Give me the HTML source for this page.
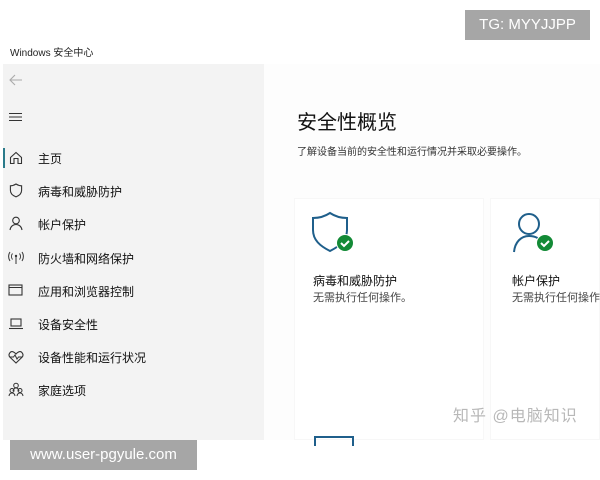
<!DOCTYPE html>
<html><head><meta charset="utf-8"><style>
*{margin:0;padding:0;box-sizing:border-box}
body{width:600px;height:480px;background:#fff;position:relative;overflow:hidden;font-family:"Liberation Sans","Noto Sans CJK SC",sans-serif;color:#1a1a1a}
.abs{position:absolute}
.side{left:3px;top:64px;width:261px;height:376px;background:#f3f3f3}
.item{position:absolute;left:38px;font-size:12px;color:#111}
.card{position:absolute;border:1px solid #f7f7f7;background:#fff}
</style></head><body>
<div class="abs" style="left:10px;top:44px;font-size:10px;color:#222">Windows 安全中心</div>
<div class="abs" style="left:264px;top:64px;width:336px;height:376px;background:#fdfdfd"></div>
<div class="abs side"></div>
<div class="abs" style="left:3px;top:148px;width:2px;height:20px;background:#2a7a8a"></div>
<svg class="abs" style="left:8px;top:73px" width="16" height="14"><path d="M14 7H2M7 2L2 7l5 5" stroke="#aaa" fill="none" stroke-width="1.1"/></svg>
<svg class="abs" style="left:9px;top:112px" width="14" height="10"><path d="M0 1.5h13M0 5h13M0 8.5h13" stroke="#333" stroke-width="1.1"/></svg>
<svg class="abs" style="left:9px;top:151px" width="14" height="14"><path d="M1.5 6.5L7 1.5l5.5 5v6h-3.5v-5h-4v5H1.5z" stroke="#333" fill="none" stroke-width="1.1"/></svg>
<div class="item" style="top:150px">主页</div>
<svg class="abs" style="left:9px;top:183px" width="14" height="15"><path d="M7 1c2 1.3 3.6 1.8 5.6 1.8v4.5c0 3.2-2.6 5.5-5.6 6.6C4 12.8 1.4 10.5 1.4 7.3V2.8C3.4 2.8 5 2.3 7 1z" stroke="#333" fill="none" stroke-width="1.1"/></svg>
<div class="item" style="top:183px">病毒和威胁防护</div>
<svg class="abs" style="left:9px;top:216px" width="14" height="15"><circle cx="7" cy="4.5" r="3.3" stroke="#333" fill="none" stroke-width="1.1"/><path d="M1 14c.5-3.5 3-5.5 6-5.5s5.5 2 6 5.5" stroke="#333" fill="none" stroke-width="1.1"/></svg>
<div class="item" style="top:216px">帐户保护</div>
<svg class="abs" style="left:8px;top:251px" width="16" height="13"><path d="M8 5v8M4.5 2.5a5 5 0 0 0 0 6M11.5 2.5a5 5 0 0 1 0 6M2 1a8 8 0 0 0 0 9M14 1a8 8 0 0 1 0 9" stroke="#333" fill="none" stroke-width="1"/><circle cx="8" cy="5" r="1.2" fill="#333"/></svg>
<div class="item" style="top:250px">防火墙和网络保护</div>
<svg class="abs" style="left:8px;top:284px" width="16" height="13"><rect x="1" y="1" width="13" height="10" stroke="#333" fill="none" stroke-width="1.1"/><path d="M1 3.5h13" stroke="#333" stroke-width="1"/></svg>
<div class="item" style="top:283px">应用和浏览器控制</div>
<svg class="abs" style="left:8px;top:318px" width="16" height="12"><rect x="3" y="1" width="10" height="7" stroke="#333" fill="none" stroke-width="1.1"/><path d="M1 10.5h14" stroke="#333" stroke-width="1.1"/></svg>
<div class="item" style="top:316px">设备安全性</div>
<svg class="abs" style="left:8px;top:350px" width="16" height="14"><path d="M8 13L2 7.3C-.5 4.5 2.5.5 5.5 2 6.8 2.7 8 4 8 4s1.2-1.3 2.5-2c3-1.5 6 2.5 3.5 5.3z" stroke="#333" fill="none" stroke-width="1.1"/><path d="M2 7h3.5l1.5-2 2 4 1.5-2H14" stroke="#333" fill="none" stroke-width="1"/></svg>
<div class="item" style="top:349px">设备性能和运行状况</div>
<svg class="abs" style="left:8px;top:382px" width="16" height="15"><circle cx="8" cy="3.5" r="2.3" stroke="#333" fill="none"/><circle cx="4" cy="8.5" r="2" stroke="#333" fill="none"/><circle cx="12" cy="8.5" r="2" stroke="#333" fill="none"/><path d="M1 14c.3-2 1.5-3 3-3s2.7 1 3 3M9 14c.3-2 1.5-3 3-3s2.7 1 3 3M5 9c.5-2 1.5-3 3-3s2.5 1 3 3" stroke="#333" fill="none"/></svg>
<div class="item" style="top:382px">家庭选项</div>

<div class="abs" style="left:297px;top:106px;font-size:20px;color:#111">安全性概览</div>
<div class="abs" style="left:297px;top:143px;font-size:10px;color:#333">了解设备当前的安全性和运行情况并采取必要操作。</div>
<div class="card" style="left:294px;top:198px;width:190px;height:242px"></div>
<div class="card" style="left:490px;top:198px;width:110px;height:242px"></div>
<svg class="abs" style="left:312px;top:210px" width="48" height="46"><path d="M18 3c6 4 11 5 17 5v12c0 10-7 16-17 21C8 36 1 30 1 20V8C7 8 12 7 18 3z" stroke="#1f5f8b" fill="none" stroke-width="2"/><circle cx="33" cy="33" r="9" fill="#fff"/><circle cx="33" cy="33" r="8" fill="#138a36"/><path d="M29 33l3 3 5-5" stroke="#fff" stroke-width="2" fill="none"/></svg>
<div class="abs" style="left:313px;top:272px;font-size:12px;color:#111">病毒和威胁防护</div>
<div class="abs" style="left:313px;top:289px;font-size:11px;color:#444">无需执行任何操作。</div>
<svg class="abs" style="left:512px;top:210px" width="48" height="46"><circle cx="17" cy="14" r="10" stroke="#1f5f8b" fill="none" stroke-width="2"/><path d="M2 42c1-10 7-16 15-16s12 4 14 8" stroke="#1f5f8b" fill="none" stroke-width="2"/><circle cx="33" cy="33" r="9" fill="#fff"/><circle cx="33" cy="33" r="8" fill="#138a36"/><path d="M29 33l3 3 5-5" stroke="#fff" stroke-width="2" fill="none"/></svg>
<div class="abs" style="left:512px;top:272px;font-size:12px;color:#111">帐户保护</div>
<div class="abs" style="left:512px;top:289px;font-size:11px;color:#444;white-space:nowrap">无需执行任何操作。</div>
<div class="abs" style="left:314px;top:436px;width:40px;height:10px;border:2px solid #1f5f8b;border-bottom:none"></div>
<div class="abs" style="left:453px;top:402px;font-size:16px;color:#b8b8b8;letter-spacing:1px">知乎 @电脑知识</div>

<div class="abs" style="left:465px;top:10px;width:125px;height:30px;background:#a6a6a6;color:#fff;font-size:15px;line-height:30px;text-align:center">TG: MYYJJPP</div>
<div class="abs" style="left:10px;top:440px;width:187px;height:30px;background:#a6a6a6;color:#fff;font-size:15px;line-height:30px;text-align:center">www.user-pgyule.com</div>
</body></html>
